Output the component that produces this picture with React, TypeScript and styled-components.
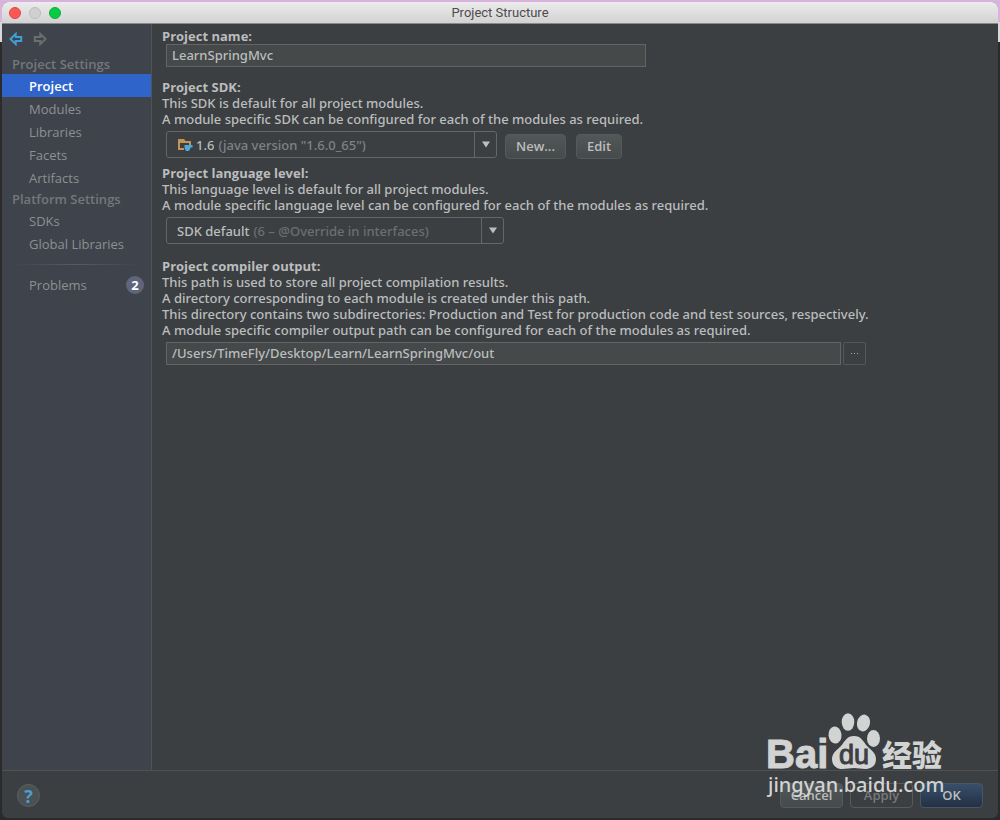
import React from "react";
import styled, { createGlobalStyle, css } from "styled-components";

const sans = `"Open Sans", "Noto Sans", sans-serif`;
const bodySans = `"Noto Sans", "Open Sans", sans-serif`;

const GlobalStyle = createGlobalStyle`
  *, *::before, *::after { box-sizing: border-box; }
  body {
    margin: 0;
    background: linear-gradient(#d9b3de 0 22px, #d8d8d8 22px 42px, #2b2b2c 42px);
    font: 13px/16px ${sans};
    color: #bbbdbe;
  }
  button, input, select { font: inherit; color: inherit; margin: 0; }
`;

const Desktop = styled.div`
  min-height: 100vh;
  padding: 2px;
  display: flex;
`;

const Window = styled.main`
  position: relative;
  flex: 1;
  display: flex;
  flex-direction: column;
  border-radius: 6px;
  overflow: hidden;
  background: #3c3f41;
`;

const TitleBar = styled.header`
  height: 22px;
  display: grid;
  grid-template-columns: 1fr auto 1fr;
  align-items: center;
  padding: 0 7px;
  background: linear-gradient(#ececec, #d2d2d2);
  border-bottom: 1px solid #8a8a8a;
`;

const Lights = styled.div`
  display: flex;
  gap: 8px;
`;

const Light = styled.button<{ $fill: string; $edge: string }>`
  width: 12px;
  height: 12px;
  padding: 0;
  border-radius: 50%;
  background: ${(p) => p.$fill};
  border: 1px solid ${(p) => p.$edge};
`;

const WindowTitle = styled.h1`
  margin: 0;
  font: 13px/16px Roboto, sans-serif;
  color: #4c4c4c;
`;

const Body = styled.div`
  flex: 1;
  display: flex;
`;

const Sidebar = styled.nav`
  width: 150px;
  flex: none;
  background: #3f434c;
  border-right: 1px solid #515355;
  padding-top: 7px;
`;

const History = styled.div`
  display: flex;
  gap: 8px;
  padding: 0 6px;
  height: 23px;
`;

const IconButton = styled.button`
  width: 16px;
  height: 16px;
  padding: 0;
  border: 0;
  background: none;
  display: grid;
  place-items: center;
`;

const GroupTitle = styled.h2`
  margin: 0;
  padding-left: 10px;
  font-size: 13px;
  line-height: 20px;
  font-weight: 600;
  color: #74777b;
`;

const NavList = styled.ul`
  list-style: none;
  margin: 0;
  padding: 0;
`;

const NavLink = styled.a<{ $active?: boolean }>`
  display: flex;
  align-items: center;
  justify-content: space-between;
  height: 23px;
  padding: 0 7px 0 27px;
  text-decoration: none;
  color: #8d9093;
  font-weight: 500;
  ${(p) =>
    p.$active &&
    css`
      background: #2f65ca;
      color: #fff;
      font-weight: 600;
    `}
`;

const Divider = styled.hr`
  margin: 9px 10px 8px;
  height: 1px;
  border: 0;
  background: linear-gradient(90deg, transparent, #5b5b5f, transparent);
`;

const Count = styled.span`
  width: 18px;
  height: 18px;
  border-radius: 50%;
  background: #5f667b;
  color: #fff;
  font-weight: 700;
  line-height: 18px;
  text-align: center;
`;

const Content = styled.form`
  flex: 1;
  padding: 4px 10px;
  font-family: ${bodySans};
  font-weight: 500;
`;

const Section = styled.section<{ $gap: number }>`
  margin-bottom: ${(p) => p.$gap}px;
`;

const Heading = styled.label`
  display: block;
  font-family: ${sans};
  font-weight: 700;
`;

const Description = styled.p`
  margin: 0 0 4px;
`;

const Row = styled.div`
  display: flex;
  align-items: flex-start;
  padding-left: 4px;
`;

const TextField = styled.input<{ $width: number }>`
  width: ${(p) => p.$width}px;
  height: 23px;
  padding: 0 5px 2px;
  background: #45494a;
  border: 1px solid #646464;
  outline: 0;
`;

const Combo = styled.div<{ $width: number }>`
  width: ${(p) => p.$width}px;
  height: 27px;
  display: flex;
  align-items: center;
  padding-left: 10px;
  border: 1px solid #646667;
  border-radius: 3px;
`;

const Select = styled.select`
  appearance: none;
  field-sizing: content;
  padding: 0;
  border: 0;
  outline: 0;
  background: transparent;
`;

const Muted = styled.span<{ $dim?: boolean }>`
  flex: 1;
  padding-left: 4px;
  white-space: nowrap;
  color: ${(p) => (p.$dim ? "#6c6e70" : "#808284")};
`;

const ComboArrow = styled.span`
  width: 22px;
  height: 25px;
  display: grid;
  place-items: center;
  border-left: 1px solid #646667;
`;

const Button = styled.button<{ $kind?: "primary" | "disabled"; $width: number }>`
  width: ${(p) => p.$width}px;
  height: 25px;
  padding: 0 0 2px;
  border: 1px solid #565a5b;
  border-radius: 4px;
  background: linear-gradient(#525758, #454a4b);
  font-family: ${sans};
  font-weight: 600;
  ${(p) =>
    p.$kind === "primary" &&
    css`
      background: linear-gradient(#384f6b, #233143);
      border-color: #4a5564;
    `}
  ${(p) =>
    p.$kind === "disabled" &&
    css`
      background: none;
      color: #777a7c;
    `}
`;

const SdkButtons = styled.div`
  display: flex;
  gap: 10px;
  padding: 3px 0 0 8px;
`;

const BrowseButton = styled.button`
  width: 23px;
  height: 23px;
  margin-left: 2px;
  padding: 0;
  border: 1px solid #555859;
  border-radius: 2px;
  background: none;
  display: grid;
  place-items: center;
`;

const Footer = styled.footer`
  height: 48px;
  display: flex;
  align-items: center;
  justify-content: space-between;
  padding: 2px 15px 0;
  border-top: 1px solid #515151;
`;

const HelpButton = styled.button`
  width: 23px;
  height: 23px;
  padding: 0;
  border: 1px solid #5c6061;
  border-radius: 50%;
  background: #4b5052;
  color: #4a9fd0;
  font-size: 18px;
  font-weight: 700;
  line-height: 20px;
`;

const Actions = styled.div`
  display: flex;
  gap: 7px;
`;

const Watermark = styled.div`
  position: absolute;
  right: 50px;
  bottom: 20px;
  width: 182px;
  color: #d2d3d3;
  pointer-events: none;
  svg { display: block; }
`;

const ArrowIcon = ({ color, flip }: { color: string; flip?: boolean }) => (
  <svg width="14" height="14" viewBox="0 0 14 14" aria-hidden="true">
    <path
      transform={flip ? "matrix(-1 0 0 1 14 0)" : undefined}
      d="M1.500 7 6.700 1.900V5h5.500v4H6.700v3.100Z"
      fill="none"
      stroke={color}
      strokeWidth="2"
    />
  </svg>
);

const DownIcon = () => (
  <svg width="8" height="7" viewBox="0 0 8 7" aria-hidden="true">
    <path d="M0 0.500h8L4 6.500Z" fill="#bbbdbe" />
  </svg>
);

const DotsIcon = () => (
  <svg width="8" height="2" viewBox="0 0 8 2" aria-hidden="true" fill="#a9abac">
    <path d="M0 0h1v1H0zM3 0h1v1H3zM6 0h1v1H6z" />
  </svg>
);

const FolderSvg = styled.svg`
  margin-right: 3px;
`;

const JdkIcon = () => (
  <FolderSvg width="16" height="14" viewBox="0 0 16 14" aria-hidden="true">
    <path d="M1 1h6l1.500 2H14v4h-2V5H3v5h4v2H1Z" fill="#c29557" />
    <path d="M7.500 7h8v2.500h-2c-.2 1.600-1 3.500-2.500 3.500h-1C8.500 13 7.500 11 7.500 9Z" fill="#4fa8d8" />
  </FolderSvg>
);

const Logo = () => (
  <svg width="182" height="88" viewBox="0 0 182 88" role="img" aria-label="Baidu" fill="currentColor">
    <text x="0" y="58" fontFamily="Liberation Sans" fontWeight="700" fontSize="40" stroke="currentColor">Bai</text>
    <ellipse cx="69" cy="25" rx="6.500" ry="8.500" transform="rotate(-6 69 25)" />
    <ellipse cx="82" cy="12" rx="6.300" ry="8.700" />
    <ellipse cx="97.500" cy="13" rx="6.500" ry="8.500" transform="rotate(12 97.500 13)" />
    <ellipse cx="107.500" cy="28.500" rx="6.500" ry="8.500" />
    <path d="M88 26c7 0 9 5 13 10 4 4 9 7 9 13 0 7-5 10-11 10-4 0-7-1-11-1s-7 1-12 1c-6 0-10-4-10-10 0-6 5-9 9-13 4-5 6-10 13-10Z" />
    <text x="73" y="54" fontFamily="Liberation Sans" fontSize="27" fill="#3c3f41" stroke="#3c3f41">du</text>
    <text x="116" y="56" fontFamily="Noto Sans CJK SC" fontWeight="900" fontSize="30">经验</text>
    <text x="2" y="82" fontFamily="Noto Sans" fontSize="20" fontWeight="500">jingyan.baidu.com</text>
  </svg>
);

const NavItem = ({ name, active, count }: { name: string; active?: boolean; count?: number }) => (
  <li>
    <NavLink href="#" $active={active} aria-current={active ? "page" : undefined}>
      {name}
      {count !== undefined && <Count>{count}</Count>}
    </NavLink>
  </li>
);

export default function App() {
  return (
    <>
      <GlobalStyle />
      <Desktop>
        <Window>
          <TitleBar>
            <Lights>
              <Light type="button" aria-label="Close" $fill="#fc5753" $edge="#df4744" />
              <Light type="button" aria-label="Minimize" $fill="#d0d0d0" $edge="#bcbcbc" />
              <Light type="button" aria-label="Zoom" $fill="#06cc45" $edge="#0fae3a" />
            </Lights>
            <WindowTitle>Project Structure</WindowTitle>
          </TitleBar>
          <Body>
            <Sidebar>
              <History>
                <IconButton type="button" aria-label="Back"><ArrowIcon color="#3d9fd6" /></IconButton>
                <IconButton type="button" aria-label="Forward"><ArrowIcon color="#6c6d6f" flip /></IconButton>
              </History>
              <GroupTitle>Project Settings</GroupTitle>
              <NavList>
                <NavItem name="Project" active />
                <NavItem name="Modules" />
                <NavItem name="Libraries" />
                <NavItem name="Facets" />
                <NavItem name="Artifacts" />
              </NavList>
              <GroupTitle>Platform Settings</GroupTitle>
              <NavList>
                <NavItem name="SDKs" />
                <NavItem name="Global Libraries" />
              </NavList>
              <Divider />
              <NavList>
                <NavItem name="Problems" count={2} />
              </NavList>
            </Sidebar>
            <Content>
              <Section $gap={12}>
                <Heading htmlFor="name">Project name:</Heading>
                <Row><TextField id="name" $width={480} defaultValue="LearnSpringMvc" /></Row>
              </Section>
              <Section $gap={6}>
                <Heading htmlFor="sdk">Project SDK:</Heading>
                <Description>
                  This SDK is default for all project modules.<br />
                  A module specific SDK can be configured for each of the modules as required.
                </Description>
                <Row>
                  <Combo $width={331}>
                    <JdkIcon />
                    <Select id="sdk"><option>1.6</option></Select>
                    <Muted>(java version "1.6.0_65")</Muted>
                    <ComboArrow><DownIcon /></ComboArrow>
                  </Combo>
                  <SdkButtons>
                    <Button type="button" $width={61}>New...</Button>
                    <Button type="button" $width={46}>Edit</Button>
                  </SdkButtons>
                </Row>
              </Section>
              <Section $gap={14}>
                <Heading htmlFor="level">Project language level:</Heading>
                <Description>
                  This language level is default for all project modules.<br />
                  A module specific language level can be configured for each of the modules as required.
                </Description>
                <Row>
                  <Combo $width={338}>
                    <Select id="level"><option>SDK default</option></Select>
                    <Muted $dim>(6 – @Override in interfaces)</Muted>
                    <ComboArrow><DownIcon /></ComboArrow>
                  </Combo>
                </Row>
              </Section>
              <Section $gap={0}>
                <Heading htmlFor="output">Project compiler output:</Heading>
                <Description>
                  This path is used to store all project compilation results.<br />
                  A directory corresponding to each module is created under this path.<br />
                  This directory contains two subdirectories: Production and Test for production code and test sources, respectively.<br />
                  A module specific compiler output path can be configured for each of the modules as required.
                </Description>
                <Row>
                  <TextField id="output" $width={675} defaultValue="/Users/TimeFly/Desktop/Learn/LearnSpringMvc/out" />
                  <BrowseButton type="button" aria-label="Browse"><DotsIcon /></BrowseButton>
                </Row>
              </Section>
            </Content>
          </Body>
          <Footer>
            <HelpButton type="button" aria-label="Help">?</HelpButton>
            <Actions>
              <Button type="button" $width={63}>Cancel</Button>
              <Button type="button" $width={63} $kind="disabled" disabled>Apply</Button>
              <Button type="button" $width={63} $kind="primary">OK</Button>
            </Actions>
          </Footer>
          <Watermark><Logo /></Watermark>
        </Window>
      </Desktop>
    </>
  );
}
